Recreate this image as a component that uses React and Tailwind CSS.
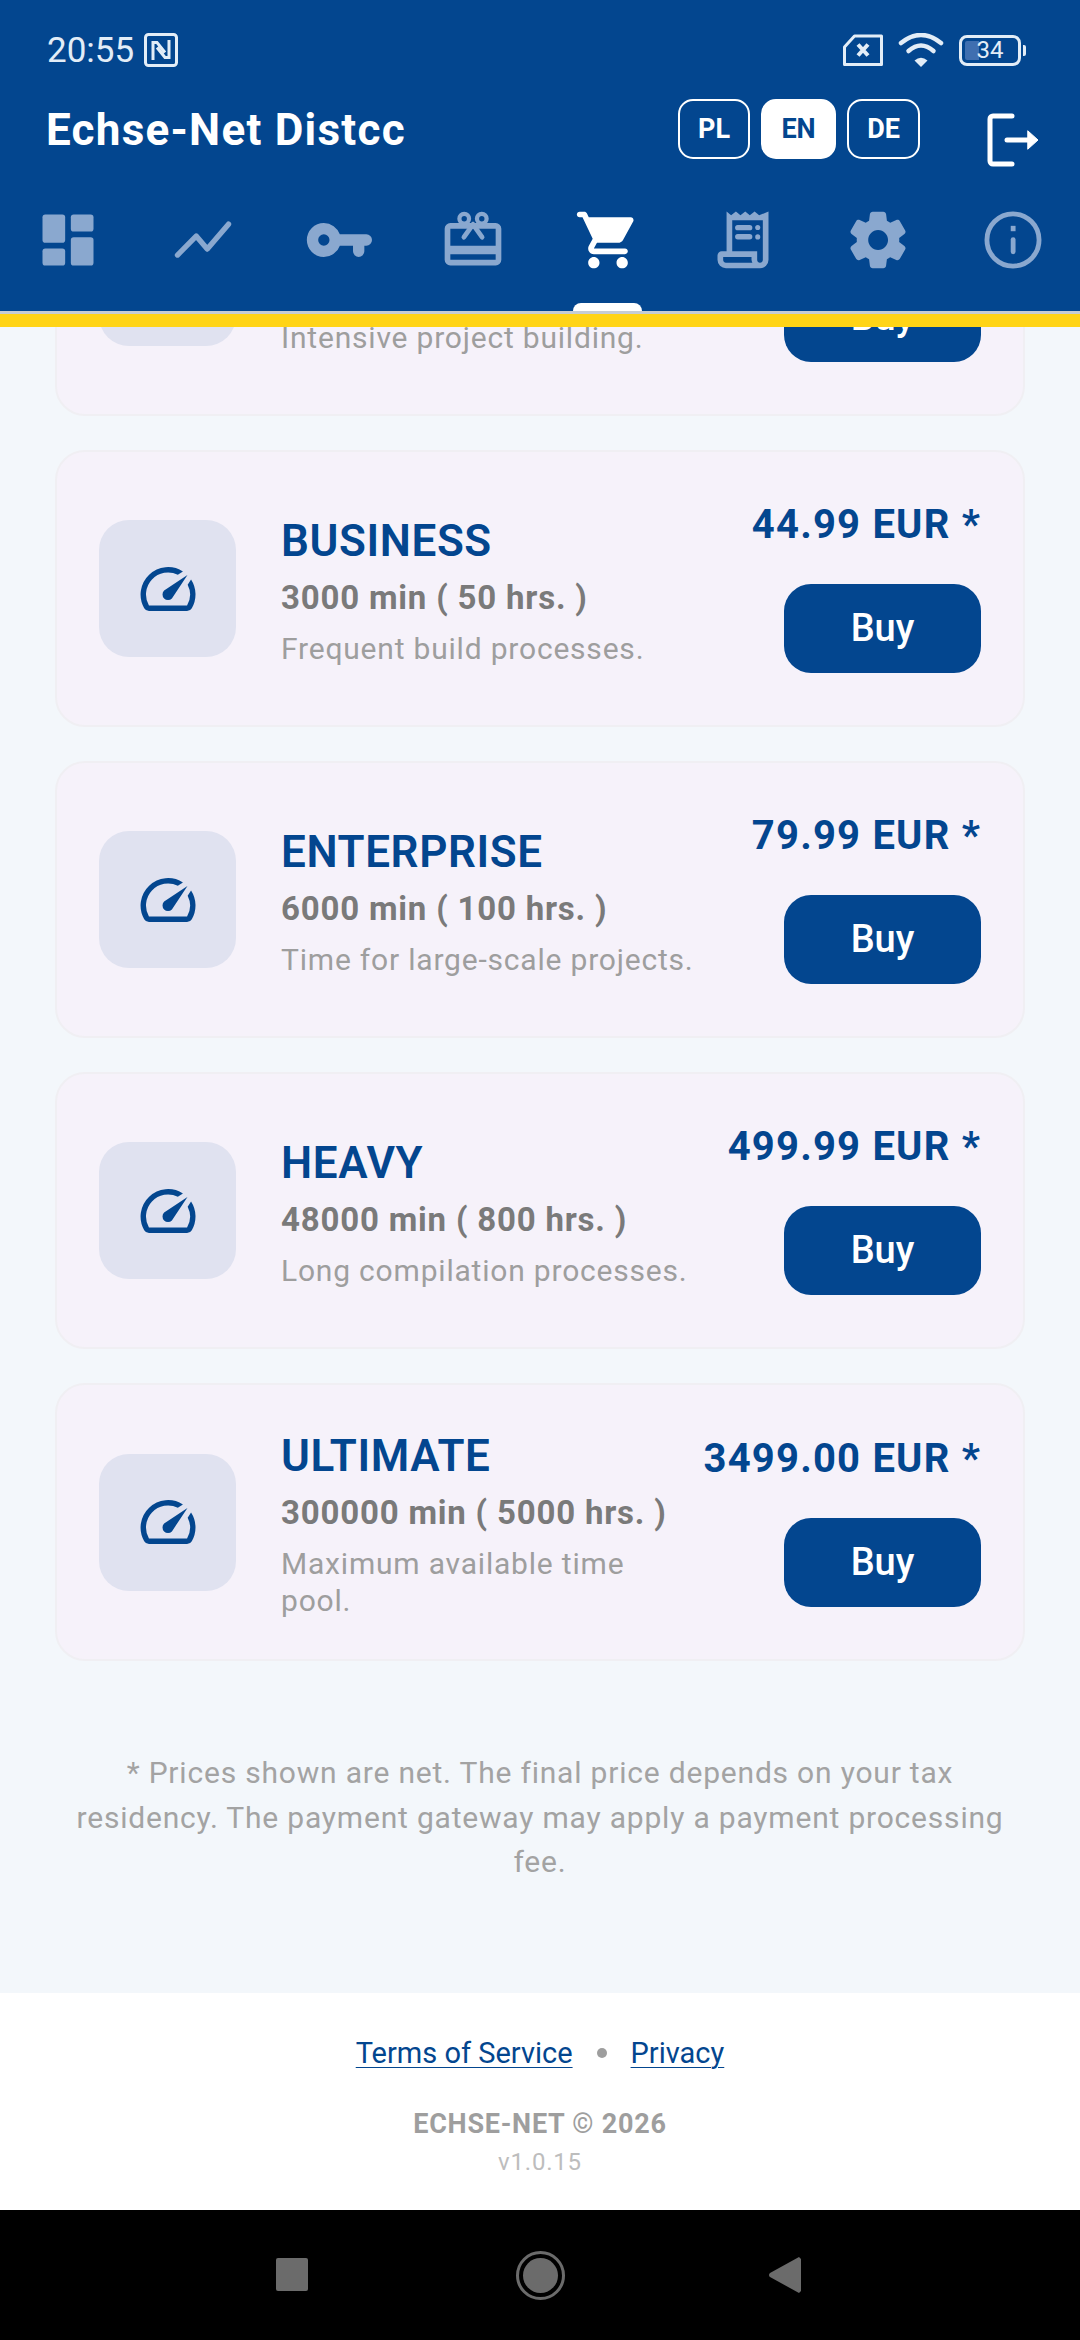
import { MdSpeed } from 'react-icons/md'

const font = { fontFamily: 'Roboto, sans-serif' }

const PLANS = [
  { name: 'PRO', mins: '1200 min ( 20 hrs. )', desc: 'Intensive project building.', price: '19.99 EUR *' },
  { name: 'BUSINESS', mins: '3000 min ( 50 hrs. )', desc: 'Frequent build processes.', price: '44.99 EUR *' },
  { name: 'ENTERPRISE', mins: '6000 min ( 100 hrs. )', desc: 'Time for large-scale projects.', price: '79.99 EUR *' },
  { name: 'HEAVY', mins: '48000 min ( 800 hrs. )', desc: 'Long compilation processes.', price: '499.99 EUR *' },
  { name: 'ULTIMATE', mins: '300000 min ( 5000 hrs. )', desc: 'Maximum available time pool.', price: '3499.00 EUR *' },
]

const Icon = ({ children, active }) => (
  <svg
    viewBox="0 0 24 24"
    className={`h-[68px] w-[68px] ${active ? 'text-white' : 'text-[#8aa8cf]'}`}
    fill="currentColor"
  >
    {children}
  </svg>
)

const TABS = [
  <Icon key="dash">
    <rect x="3" y="3" width="8" height="10" rx="1" />
    <rect x="3" y="15" width="8" height="6" rx="1" />
    <rect x="13" y="3" width="8" height="6" rx="1" />
    <rect x="13" y="11" width="8" height="10" rx="1" />
  </Icon>,
  <Icon key="chart">
    <path d="M3 17.300L9.600 10.600L13.500 15.200L21 6.400" fill="none" stroke="currentColor" strokeWidth="1.900" strokeLinecap="round" strokeLinejoin="round" />
  </Icon>,
  <Icon key="key">
    <path d="M12.650 10A6 6 0 0 0 7 6a6 6 0 1 0 0 12 6 6 0 0 0 5.650-4H17.300v2a2 2 0 0 0 4 0v-2h.7a2 2 0 0 0 0-4zM7 14a2 2 0 1 1 0-4 2 2 0 0 1 0 4z" />
  </Icon>,
  <Icon key="gift">
    <path fillRule="evenodd" d="M4 6h16a2 2 0 0 1 2 2v11a2 2 0 0 1-2 2H4a2 2 0 0 1-2-2V8a2 2 0 0 1 2-2zm0 2v6h16V8zm0 9v2h16v-2z" />
    <circle cx="8.900" cy="4.500" r="1.700" fill="none" stroke="currentColor" strokeWidth="1.500" />
    <circle cx="15.100" cy="4.500" r="1.700" fill="none" stroke="currentColor" strokeWidth="1.500" />
    <path d="M12 6.500L8.800 11M12 6.500L15.200 11" fill="none" stroke="currentColor" strokeWidth="1.700" strokeLinecap="round" />
  </Icon>,
  <Icon key="cart" active>
    <path d="M7 18c-1.100 0-1.990.9-1.990 2S5.900 22 7 22s2-.9 2-2-.9-2-2-2zM1 3c0 .55.45 1 1 1h1l3.600 7.590-1.350 2.440C4.520 15.370 5.480 17 7 17h11c.55 0 1-.45 1-1s-.45-1-1-1H7l1.100-2h7.450c.75 0 1.410-.41 1.750-1.030l3.580-6.490c.37-.66-.11-1.480-.87-1.480H5.210l-.67-1.430c-.16-.35-.52-.57-.9-.57H2c-.55 0-1 .45-1 1zm16 15c-1.100 0-1.990.9-1.990 2s.89 2 1.990 2 2-.9 2-2-.9-2-2-2z" />
  </Icon>,
  <Icon key="receipt">
    <path fillRule="evenodd" d="M6.200 1.900L7.800 3.300L9.500 1.900L11.100 3.300L12.800 1.900L14.400 3.300L16.100 1.900L17.700 3.300L21 1.900V19a3 3 0 0 1-3 3H6a3 3 0 0 1-3-3v-1.500A1.500 1.500 0 0 1 4.500 16h1.700zM8.200 5v11H17v3a1 1 0 0 0 2 0V5zM5 18v1a1 1 0 0 0 1 1h9.300a3 3 0 0 1-.3-1v-1z" />
    <rect x="9.200" y="6.700" width="6.100" height="1.900" rx=".95" />
    <rect x="9.200" y="9.900" width="6.100" height="1.900" rx=".95" />
    <circle cx="17.200" cy="7.600" r=".9" />
    <circle cx="17.200" cy="10.900" r=".9" />
  </Icon>,
  <Icon key="gear">
    <path d="M19.500 12c0-.23-.01-.45-.03-.68l1.860-1.410c.4-.3.51-.86.26-1.300l-1.870-3.230c-.25-.44-.79-.62-1.250-.42l-2.150.91c-.37-.26-.76-.49-1.170-.68l-.29-2.310c-.06-.5-.49-.88-.99-.88h-3.730c-.51 0-.94.38-1 .88l-.29 2.310c-.41.19-.8.42-1.170.68l-2.150-.91c-.46-.2-1-.02-1.250.42L2.410 8.620c-.25.44-.14.99.26 1.300l1.860 1.410c-.02.22-.03.44-.03.67s.01.45.03.68l-1.860 1.410c-.4.3-.51.86-.26 1.300l1.870 3.230c.25.44.79.62 1.250.42l2.150-.91c.37.26.76.49 1.170.68l.29 2.310c.06.5.49.88.99.88h3.730c.5 0 .93-.38.99-.88l.29-2.310c.41-.19.8-.42 1.170-.68l2.150.91c.46.2 1 .02 1.250-.42l1.870-3.230c.25-.44.14-.99-.26-1.300l-1.860-1.410c.03-.23.04-.45.04-.68zm-7.460 3.500c-1.930 0-3.500-1.570-3.500-3.500s1.570-3.500 3.500-3.500 3.500 1.570 3.500 3.500-1.570 3.500-3.500 3.500z" />
  </Icon>,
  <Icon key="info">
    <circle cx="12" cy="12" r="9.200" fill="none" stroke="currentColor" strokeWidth="1.700" />
    <rect x="11.200" y="7" width="1.700" height="1.900" />
    <rect x="11.200" y="11" width="1.700" height="6" rx=".85" />
  </Icon>,
]

const StatusBar = () => (
  <div className="flex h-[90px] items-center justify-between pl-[47px] pr-[54px] pt-[10px] text-[#e3edf7]">
    <div className="flex items-center gap-[10px]">
      <span className="text-[35px] leading-none">20:55</span>
      <svg viewBox="0 0 34 34" className="h-[34px] w-[34px]" fill="none" stroke="currentColor">
        <rect x="1.500" y="1.500" width="31" height="31" rx="3" strokeWidth="3" />
        <path d="M9 27V9.500h4l8 10M25 7v17.500h-4l-8-10" strokeWidth="3" />
      </svg>
    </div>
    <div className="flex items-center">
      <svg viewBox="0 0 40 32" className="mr-[15px] h-[32px] w-[40px]" fill="none" stroke="currentColor">
        <path d="M1.500 13L11.500 2H38.500V30.500H1.500z" strokeWidth="3" strokeLinejoin="round" />
        <path d="M15 10.500l10 11M25 10.500l-10 11" strokeWidth="4" />
      </svg>
      <svg viewBox="0 0 46 34" className="mr-[15px] h-[34px] w-[46px]" fill="none" stroke="currentColor" strokeLinecap="round">
        <path d="M3 10Q23 -6 43 10" strokeWidth="4.500" />
        <path d="M10.500 18Q23 7 35.500 18" strokeWidth="4.500" />
        <path d="M23 34L16.500 27.500Q23 22 29.500 27.500z" fill="currentColor" stroke="none" />
      </svg>
      <div className="relative flex h-[31px] w-[62px] items-center justify-center rounded-[8px] border-[3px] border-[#e3edf7]">
        <div className="absolute bottom-[3px] left-[3px] top-[3px] w-[14px] rounded-l-[2px] bg-[#3f6fb0]" />
        <span className="relative text-[24px] leading-none">34</span>
      </div>
      <div className="ml-[2px] h-[11px] w-[3px] rounded-r-[2px] bg-[#e3edf7]" />
    </div>
  </div>
)

const LangButton = ({ label, active, width }) => (
  <div
    className={`flex h-[60px] items-center justify-center rounded-[15px] border-2 border-white text-[27px] font-bold ${width} ${active ? 'bg-white text-[#03468f]' : 'text-white'}`}
  >
    {label}
  </div>
)

const Header = () => (
  <header className="shrink-0 bg-[#03468f]">
    <StatusBar />
    <div className="flex h-[80px] items-center justify-between pl-[46px] pr-[40px]">
      <div className="text-[44px] font-bold leading-none tracking-[1.25px] text-white">Echse-Net Distcc</div>
      <div className="flex items-center">
        <div className="-mt-[2px] flex gap-[11px]">
          <LangButton label="PL" width="w-[72px]" />
          <LangButton label="EN" width="w-[75px]" active />
          <LangButton label="DE" width="w-[73px]" />
        </div>
        <svg viewBox="0 0 53 54" className="ml-[67px] mt-[20px] h-[54px] w-[53px]" fill="none" stroke="#fff" strokeWidth="5" strokeLinecap="round" strokeLinejoin="round">
          <path d="M25 3H6a3 3 0 0 0-3 3v42a3 3 0 0 0 3 3h19" />
          <path d="M20 27h24" />
          <path d="M41 18l10 9-10 9z" fill="#fff" strokeWidth="1" />
        </svg>
      </div>
    </div>
    <nav className="relative mt-[4px] grid h-[137px] grid-cols-8 pb-[5px]">
      {TABS.map((t, i) => (
        <div key={i} className="flex items-center justify-center">{t}</div>
      ))}
      <div className="absolute bottom-0 left-[573px] h-[8px] w-[69px] rounded-t-[14px] bg-white" />
    </nav>
    <div className="h-[3px] bg-[#c5cdd4]" />
    <div className="h-[13px] bg-[#ffd416]" />
  </header>
)

const PlanCard = ({ plan }) => (
  <div className="flex min-h-[277px] items-center rounded-[30px] border-2 border-[#f0eff3] bg-[#f6f2fa] px-[42px] py-[43px]">
    <div className="flex h-[137px] w-[137px] shrink-0 items-center justify-center rounded-[30px] bg-[#e0e2f0] text-[#03468f]">
      <MdSpeed size={66} />
    </div>
    <div className="ml-[45px] mr-[16px] min-w-0 flex-1 translate-y-[3px]">
      <div className="text-[44px] font-semibold leading-[50px] tracking-[0.6px] text-[#03468f]">{plan.name}</div>
      <div className="mt-[12px] text-[33px] font-bold leading-[40px] tracking-[0.8px] text-[#7a7a7a]">{plan.mins}</div>
      <div className="mt-[12px] text-[30px] leading-[37px] tracking-[0.8px] text-[#9e9e9e]">{plan.desc}</div>
    </div>
    <div className="flex shrink-0 flex-col items-end">
      <div className="text-[40px] font-bold leading-[42px] tracking-[1.2px] text-[#03468f]">{plan.price}</div>
      <div className="mt-[38px] flex h-[89px] w-[197px] items-center justify-center rounded-[27px] bg-[#03468f] text-[38px] font-medium text-white">Buy</div>
    </div>
  </div>
)

const Footer = () => (
  <footer className="flex h-[217px] shrink-0 flex-col items-center bg-white pt-[42px]">
    <div className="flex items-center text-[29px] leading-[36px] text-[#03468f]">
      <span className="underline decoration-1 underline-offset-[4px]">Terms of Service</span>
      <span className="mx-[24px] h-[10px] w-[10px] rounded-full bg-[#9e9e9e]" />
      <span className="underline decoration-1 underline-offset-[4px]">Privacy</span>
    </div>
    <div className="mt-[36px] text-[27px] font-bold leading-[34px] tracking-[0.75px] text-[#9e9e9e]">ECHSE-NET © 2026</div>
    <div className="mt-[7px] text-[24px] leading-[28px] tracking-[0.8px] text-[#bdbdbd]">v1.0.15</div>
  </footer>
)

const NavBar = () => (
  <div className="flex h-[130px] shrink-0 items-start justify-center bg-black pr-[4px] pt-[41px]">
    <div className="mt-[7px] h-[33px] w-[32px] rounded-[2px] bg-[#6b6b6b]" />
    <div className="ml-[208px] mr-[204px] flex h-[49px] w-[49px] items-center justify-center rounded-full border-[3px] border-[#6b6b6b]">
      <div className="h-[35px] w-[35px] rounded-full bg-[#6b6b6b]" />
    </div>
    <svg viewBox="0 0 32 36" className="mt-[6px] h-[36px] w-[32px]" fill="#6b6b6b">
      <path d="M32 2v32l-2 2L1 20a2.500 2.500 0 0 1 0-4L30 0z" />
    </svg>
  </div>
)

export default function App() {
  return (
    <div className="flex h-[2340px] w-[1080px] flex-col overflow-hidden bg-[#f3f7fb]" style={font}>
      <Header />
      <main className="min-h-0 flex-1 overflow-hidden">
        <div className="-mt-[188px] flex flex-col gap-[34px] px-[55px]">
          {PLANS.map(p => <PlanCard key={p.name} plan={p} />)}
        </div>
        <p className="mx-auto mt-[90px] w-[940px] text-center text-[30px] leading-[44.5px] tracking-[0.8px] text-[#a3a3a3]">
          * Prices shown are net. The final price depends on your tax residency. The payment gateway may apply a payment processing fee.
        </p>
      </main>
      <Footer />
      <NavBar />
    </div>
  )
}
